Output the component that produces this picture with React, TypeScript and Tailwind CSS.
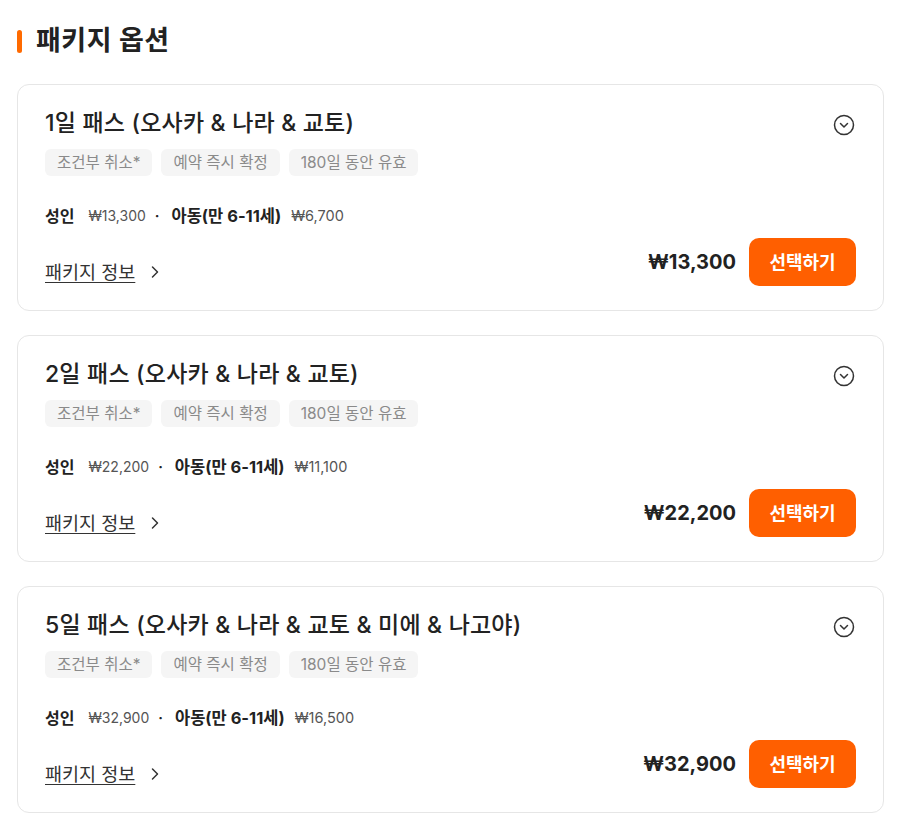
import { ChevronRight } from "lucide-react";

const packages = [
  { title: "1일 패스 (오사카 & 나라 & 교토)", adult: "13,300", child: "6,700" },
  { title: "2일 패스 (오사카 & 나라 & 교토)", adult: "22,200", child: "11,100" },
  { title: "5일 패스 (오사카 & 나라 & 교토 & 미에 & 나고야)", adult: "32,900", child: "16,500" },
];

const tags = ["조건부 취소*", "예약 즉시 확정", "180일 동안 유효"];

function CircleChevron() {
  return (
    <svg width="22" height="22" viewBox="0 0 22 22" fill="none" stroke="#333" strokeWidth="1.5" strokeLinecap="round" strokeLinejoin="round">
      <circle cx="11" cy="11" r="9.5" />
      <path d="M7.5 9.5 L11 13 L14.5 9.5" />
    </svg>
  );
}

export default function App() {
  return (
    <main
      className="min-h-screen bg-white pl-[17px] pr-[16px] pt-[26px]"
      style={{ fontFamily: "Inter, 'Noto Sans CJK KR', sans-serif" }}
    >
      {/* Header */}
      <div className="flex items-center gap-[14px] h-[30px]">
        <div className="w-[5px] h-[23px] rounded-full bg-[#ff6a00]" />
        <h2 className="text-[27px] font-bold text-[#222] leading-[30px] tracking-[0.5px]">패키지 옵션</h2>
      </div>

      <div className="mt-[28px] flex flex-col gap-[24px]">
        {packages.map((p, i) => (
          <div key={i} className="border border-[#e6e6e6] rounded-[12px] px-[27px] pt-[22px] pb-[24px]">
            <div className="flex items-center justify-between">
              <div className="text-[23px] font-medium text-[#222] leading-[32px] tracking-[0.2px]">{p.title}</div>
              <div className="mr-[1px] mt-[3px]"><CircleChevron /></div>
            </div>

            <div className="mt-[10px] flex gap-[9px]">
              {tags.map((t, j) => (
                <span key={j} className="h-[27px] flex items-center px-[12px] rounded-[6px] bg-[#f5f5f5] text-[15.5px] text-[#8a8a8a]">
                  {t}
                </span>
              ))}
            </div>

            <div className="mt-[28px] flex items-center leading-[24px]">
              <span className="font-bold text-[#222] text-[16px]">성인</span>
              <span className="ml-[14px] text-[#555] text-[14px]">₩{p.adult}</span>
              <span className="ml-[9px] mr-[12px] font-bold text-[#222] text-[14px]">·</span>
              <span className="font-bold text-[#222] text-[16.5px]">아동(만 6-11세)</span>
              <span className="ml-[10px] text-[#555] text-[14.5px]">₩{p.child}</span>
            </div>

            <div className="mt-[10px] flex items-end justify-between">
              <a className="mb-[3px] flex items-center gap-[10px] text-[18.5px] text-[#333] leading-[22px]">
                <span className="underline underline-offset-[3px]">패키지 정보</span>
                <ChevronRight size={20} strokeWidth={1.8} className="text-[#333]" />
              </a>
              <div className="flex items-center gap-[13px]">
                <span className="text-[20px] font-bold text-[#222]">₩{p.adult}</span>
                <button className="h-[48px] w-[107px] rounded-[10px] bg-[#ff5f00] text-white text-[18px] font-bold">
                  선택하기
                </button>
              </div>
            </div>
          </div>
        ))}
      </div>
    </main>
  );
}
